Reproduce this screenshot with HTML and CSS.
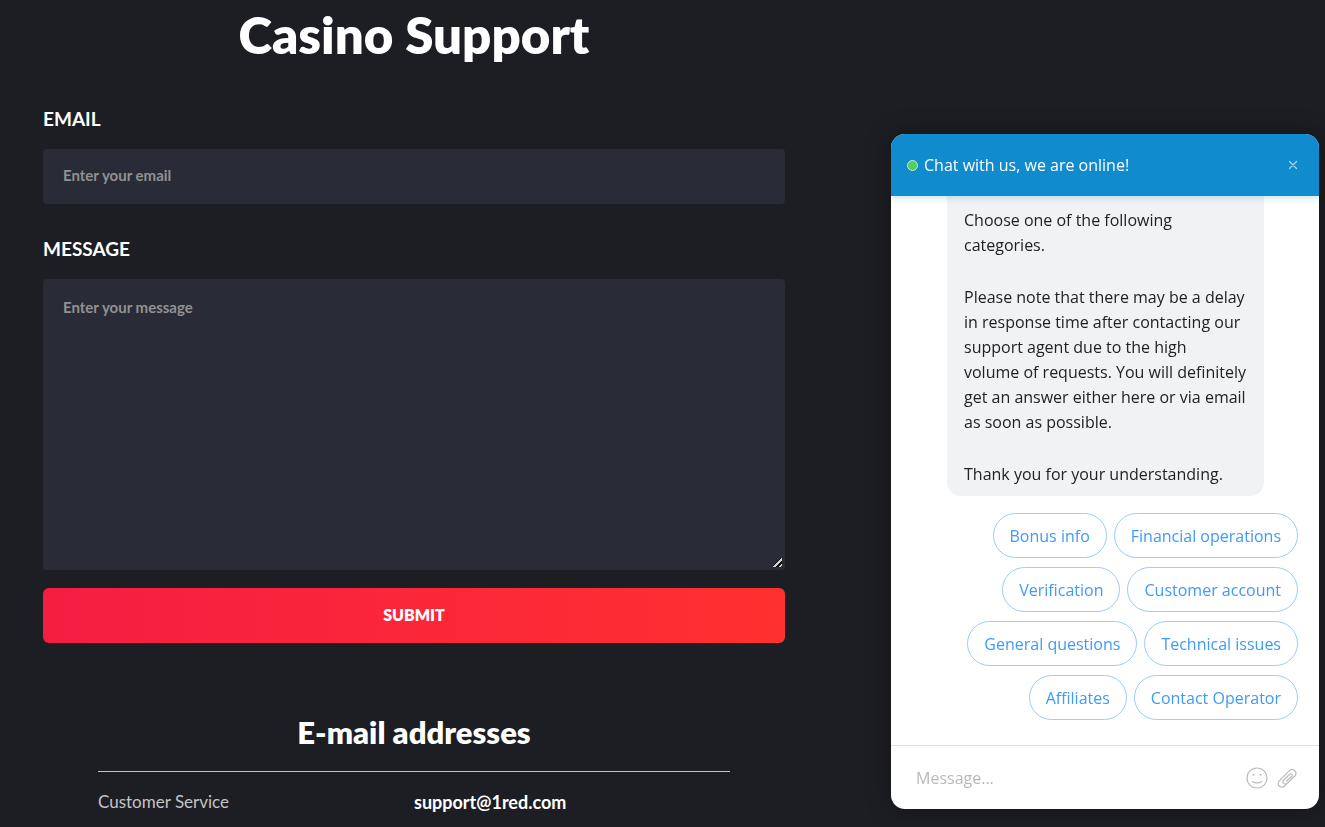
FILE: index.html
```
<!DOCTYPE html>
<html lang="en">
<head>
    <meta charset="UTF-8">
    <meta name="viewport" content="width=device-width, initial-scale=1.0">
    <title>Casino Support</title>
    <link rel="stylesheet" href="styles.css">
</head>
<body>
    <main class="support">
        <h1>Casino Support</h1>
        <form class="support-form">
            <label for="email">EMAIL</label>
            <input id="email" type="email" placeholder="Enter your email">
            <label for="message">MESSAGE</label>
            <textarea id="message" placeholder="Enter your message"></textarea>
            <button class="submit-btn" type="submit">SUBMIT</button>
        </form>
        <section class="contacts">
            <h2>E-mail addresses</h2>
            <table>
                <tr>
                    <th scope="row">Customer Service</th>
                    <td>support@1red.com</td>
                </tr>
            </table>
        </section>
    </main>

    <aside class="chat">
        <header class="chat-header">
            <span class="chat-status"></span>
            <span class="chat-title">Chat with us, we are online!</span>
            <button class="chat-close" type="button" aria-label="Close">
                <svg width="10" height="10" viewBox="0 0 10 10">
                    <path d="M1.500 1.500l7 7M8.500 1.500l-7 7"/>
                </svg>
            </button>
        </header>
        <div class="chat-body">
            <div class="chat-bubble">
                <p>Choose one of the following categories.</p>
                <p>Please note that there may be a delay in response time after contacting our support agent due to the high volume&nbsp;of requests. You will definitely get an answer either here or via email as soon as possible.</p>
                <p>Thank you for your understanding.</p>
            </div>
            <div class="chat-replies">
                <button type="button">Bonus info</button>
                <button type="button">Financial operations</button>
                <button type="button">Verification</button>
                <button type="button">Customer account</button>
                <button type="button">General questions</button>
                <button type="button">Technical issues</button>
                <button type="button">Affiliates</button>
                <button type="button">Contact Operator</button>
            </div>
        </div>
        <footer class="chat-footer">
            <input type="text" placeholder="Message..." aria-label="Message">
            <button type="button" aria-label="Emoji">
                <svg width="22" height="22" viewBox="0 0 22 22">
                    <circle cx="11" cy="11" r="10"/>
                    <path d="M6.500 14.500c2 1.800 7 1.800 9 0"/>
                    <circle class="eye" cx="7.500" cy="7.800" r="1"/>
                    <circle class="eye" cx="14.500" cy="7.800" r="1"/>
                </svg>
            </button>
            <button type="button" aria-label="Attach file">
                <svg width="20" height="20" viewBox="0 0 20 20">
                    <path d="M10.500 15L7.500 18a3.600 3.600 0 0 1-5.300-5.200L12.300 2.600a3.900 3.900 0 0 1 5.600 5.400L10.200 15.300a2.400 2.400 0 0 1-3.500-3.300l6.100-5.800a1.400 1.400 0 0 1 2 2L9.500 13"/>
                </svg>
            </button>
        </footer>
    </aside>
</body>
</html>
```
FILE: styles.css
```
* {
    box-sizing: border-box;
}

body {
    margin: 0;
    background: #1d1e23;
    color: #fff;
    font-family: Lato, "Liberation Sans", sans-serif;
    overflow: hidden;
}

button {
    cursor: pointer;
}

.support {
    width: 56%;
    margin-left: 43px;
}

h1 {
    margin: 0 0 35px;
    font-size: 51px;
    line-height: 70px;
    font-weight: 800;
    text-align: center;
}

.support-form {
    display: flex;
    flex-direction: column;
}

.support-form label {
    margin-bottom: 17px;
    font-size: 19px;
    line-height: 27px;
    font-weight: 700;
}

.support-form input,
.support-form textarea {
    width: 100%;
    border: 0;
    border-radius: 4px;
    background: #292b36;
    color: #fff;
    font: 700 15px/20px Lato, "Liberation Sans", sans-serif;
}

.support-form input {
    height: 55px;
    margin-bottom: 31px;
    padding: 0 20px 3px;
}

.support-form textarea {
    height: 291px;
    margin-bottom: 18px;
    padding: 18px 20px;
    resize: vertical;
}

.support-form textarea::-webkit-resizer {
    background: linear-gradient(135deg, transparent 40%, #111 40% 48%, #d0d0d0 48% 62%, #111 62% 78%, #d0d0d0 78% 92%, transparent 92%) 3px 3px / 9px 9px no-repeat;
}

.support-form input::placeholder,
.support-form textarea::placeholder {
    color: #919191;
}

.submit-btn {
    height: 55px;
    padding: 0 0 2px;
    border: 0;
    border-radius: 6px;
    background: linear-gradient(90deg, #f61d43, #ff302f);
    color: #fff;
    font: 800 16px/20px Lato, "Liberation Sans", sans-serif;
}

.contacts {
    margin: 69px 55px 0;
}

h2 {
    margin: 0;
    padding-bottom: 19px;
    border-bottom: 1px solid #bfc0d2;
    font-size: 31px;
    line-height: 40px;
    font-weight: 800;
    text-align: center;
}

table {
    width: 100%;
    margin-top: 15px;
    border-collapse: collapse;
    table-layout: fixed;
    font-size: 17px;
    line-height: 30px;
}

th,
td {
    padding: 0;
    text-align: left;
}

th {
    color: #c4c4c6;
    font-weight: 400;
}

td {
    font-size: 18px;
    font-weight: 700;
}

/* chat widget */
.chat {
    position: fixed;
    right: 6px;
    bottom: 18px;
    display: flex;
    flex-direction: column;
    width: 428px;
    height: 675px;
    border-radius: 14px;
    background: #fff;
    box-shadow: 0 0 24px rgba(0, 0, 0, 0.35);
    color: #222;
    font-family: "Open Sans", "Noto Sans", sans-serif;
    font-size: 16px;
    overflow: hidden;
}

.chat button,
.chat input {
    border: 0;
    background: none;
    font: inherit;
}

.chat svg {
    display: block;
    fill: none;
    stroke: #bbb;
    stroke-width: 1.2;
    stroke-linecap: round;
    stroke-linejoin: round;
}

.chat-header {
    z-index: 1;
    display: flex;
    align-items: center;
    gap: 6px;
    height: 62px;
    padding: 0 21px 0 16px;
    background: #0f8bce;
    box-shadow: 0 1px 8px rgba(15, 139, 206, 0.3);
    color: #fff;
}

.chat-status {
    width: 11px;
    height: 11px;
    border: 1px solid #c2edcb;
    border-radius: 50%;
    background: #4fd05b;
}

.chat-header .chat-close {
    margin-left: auto;
    padding: 0;
}

.chat-header .chat-close svg {
    stroke: #a9d8f0;
}

.chat-body {
    flex: 1;
    display: flex;
    flex-direction: column;
    justify-content: flex-end;
    gap: 17px;
    min-height: 0;
    padding: 0 21px 25px 56px;
    overflow: hidden;
}

.chat-bubble {
    width: 317px;
    padding: 30px 18px 9px 17px;
    border-radius: 14px;
    background: #f1f2f4;
    line-height: 25px;
}

.chat-bubble p {
    margin: 0 0 27px;
}

.chat-bubble p:last-child {
    margin-bottom: 0;
}

.chat-replies {
    display: flex;
    flex-wrap: wrap;
    justify-content: flex-end;
    gap: 9px 7px;
}

.chat-replies button {
    height: 45px;
    padding: 0 16px;
    border: 1px solid #9dcbfb;
    border-radius: 23px;
    color: #3f9bf7;
}

.chat-footer {
    display: flex;
    align-items: center;
    gap: 9px;
    height: 64px;
    padding: 0 22px 0 25px;
    border-top: 1px solid #e1e1e1;
}

.chat-footer input {
    flex: 1;
    min-width: 0;
    padding: 0;
}

.chat-footer input::placeholder {
    color: #b9b9b9;
}

.chat-footer button {
    padding: 0;
}

.chat-footer .eye {
    fill: #bbb;
    stroke: none;
}
```
